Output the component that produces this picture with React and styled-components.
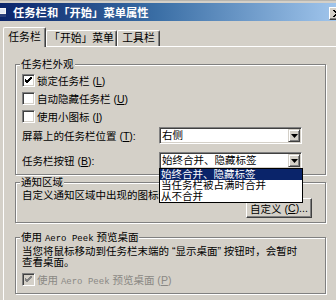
import React from 'react';
import styled, { createGlobalStyle } from 'styled-components';

const Global = createGlobalStyle`
  html, body { margin: 0; padding: 0; overflow: hidden; background: #d4d0c8; }
  body {
    width: 336px; height: 300px;
    font-family: "Liberation Sans", "Noto Sans CJK SC", sans-serif;
    font-size: 10.5px; color: #000;
  }
`;

const Window = styled.div`
  width: 347px;
  height: 300px;
  display: flex;
  flex-direction: column;
  background: #d4d0c8;
  border-top: 1px solid #b8b5ae;
  box-sizing: border-box;
`;

const TitleBar = styled.div`
  margin-top: 2px;
  height: 18px;
  display: flex;
  align-items: center;
  background: linear-gradient(to right, #0a246a 0%, #3a6ea5 45%, #a6caf0 100%);
  color: #fff;
  font-weight: bold;
  font-size: 11.3px;
  font-family: "Noto Sans CJK SC", sans-serif;
`;

const TitleIcon = styled.svg`
  margin-left: -4px;
  margin-right: 7px;
  flex: none;
`;

const CloseBtn = styled.div`
  margin-left: auto;
  margin-right: 2px;
  margin-top: 3px;
  width: 16px;
  height: 13px;
  box-sizing: border-box;
  background: #d4d0c8;
  border: 1px solid;
  border-color: #fff #404040 #404040 #fff;
  box-shadow: inset -1px -1px 0 #808080;
  display: flex;
  align-items: center;
  justify-content: center;
`;

const TabStrip = styled.div`
  display: flex;
  align-items: flex-end;
  margin-top: 6px;
  padding-left: 3px;
  height: 20px;
`;

const Tab = styled.div`
  position: relative;
  z-index: ${p => (p.$active ? 2 : 0)};
  box-sizing: border-box;
  width: ${p => p.$w}px;
  height: ${p => (p.$active ? 20 : 16)}px;
  margin-bottom: ${p => (p.$active ? 0 : 1)}px;
  background: #d4d0c8;
  border-top: 1px solid #fff;
  border-left: 1px solid #fff;
  border-right: 1px solid #404040;
  border-radius: 2px 2px 0 0;
  box-shadow: inset -1px 0 0 #808080;
  display: flex;
  align-items: ${p => (p.$active ? 'flex-start' : 'center')};
  padding-top: ${p => (p.$active ? 3 : 0)}px;
  justify-content: center;
  font-size: 10.8px;
  line-height: 13px;
  white-space: nowrap;
`;

const Panel = styled.div`
  flex: 1;
  margin-top: -1px;
  margin-left: 3px;
  border-top: 1px solid #fff;
  border-left: 1px solid #fff;
  padding-left: 11px;
  display: flex;
  flex-direction: column;
`;

const Group = styled.div`
  position: relative;
  width: 311px;
  box-sizing: border-box;
  margin-top: ${p => p.$mt}px;
  padding: 0 0 ${p => p.$pb}px 6px;
  border: 1px solid #808080;
  box-shadow: inset 1px 1px 0 #fff, 1px 1px 0 #fff;
  display: flex;
  flex-direction: column;
`;

const Legend = styled.div`
  align-self: flex-start;
  margin-top: -7px;
  margin-left: -2px;
  padding: 0 1px;
  line-height: 12px;
  background: #d4d0c8;
  white-space: nowrap;
`;

const Mono = styled.span`
  font-family: "Liberation Mono", monospace;
  font-size: 9px;
`;

const CheckRow = styled.div`
  display: flex;
  align-items: center;
  gap: 2px;
  height: ${p => p.$h || 18}px;
  margin-top: ${p => p.$mt || 0}px;
  color: ${p => (p.$disabled ? '#8a8884' : '#000')};
  white-space: nowrap;
`;

const Box = styled.div`
  width: 13px;
  height: 13px;
  box-sizing: border-box;
  background: ${p => (p.$disabled ? '#d4d0c8' : '#fff')};
  border: 1px solid;
  border-color: #808080 #fff #fff #808080;
  box-shadow: inset 1px 1px 0 #404040, inset -1px -1px 0 #d4d0c8;
  display: flex;
  align-items: center;
  justify-content: center;
  flex: none;
`;

const U = styled.span`
  text-decoration: underline;
`;

const ComboRow = styled.div`
  display: grid;
  grid-template-columns: 137px 143px;
  align-items: center;
  margin-top: ${p => p.$mt}px;
  white-space: nowrap;
`;

const Combo = styled.div`
  position: relative;
  height: 17px;
  box-sizing: border-box;
  padding: 1px;
  background: #fff;
  border: 1px solid;
  border-color: #808080 #fff #fff #808080;
  box-shadow: inset 1px 1px 0 #404040, inset -1px -1px 0 #d4d0c8;
  display: flex;
  align-items: center;
`;

const ComboText = styled.span`
  flex: 1;
  padding-left: 1px;
  line-height: 13px;
  overflow: hidden;
`;

const DropBtn = styled.div`
  width: 12px;
  height: 13px;
  box-sizing: border-box;
  background: #d4d0c8;
  border: 1px solid;
  border-color: #d4d0c8 #404040 #404040 #d4d0c8;
  box-shadow: inset 1px 1px 0 #fff, inset -1px -1px 0 #808080;
  display: flex;
  align-items: center;
  justify-content: center;
`;

const List = styled.div`
  position: absolute;
  z-index: 5;
  top: 15px;
  left: -1px;
  width: calc(100% + 3px);
  box-sizing: border-box;
  background: #fff;
  border: 1px solid #000;
  display: flex;
  flex-direction: column;
`;

const Item = styled.div`
  height: 11px;
  line-height: 11px;
  padding-left: 1px;
  background: ${p => (p.$sel ? '#0a246a' : '#fff')};
  color: ${p => (p.$sel ? '#fff' : '#000')};
  white-space: nowrap;
`;

const Text = styled.div`
  line-height: ${p => p.$lh}px;
  margin-top: ${p => p.$mt || 0}px;
  white-space: nowrap;
`;

const BtnRow = styled.div`
  display: flex;
  justify-content: flex-end;
  margin-top: -3px;
  padding-right: 13px;
`;

const Button = styled.div`
  width: 66px;
  height: 20px;
  box-sizing: border-box;
  background: #d4d0c8;
  border: 1px solid;
  border-color: #fff #404040 #404040 #fff;
  box-shadow: inset -1px -1px 0 #808080;
  display: flex;
  align-items: center;
  justify-content: center;
  white-space: nowrap;
`;

const Check = ({ color = '#000' }) => (
  <svg width="7" height="7" viewBox="0 0 7 7">
    <path d="M0 3 L2 5 L7 0 M0 4 L2 6 L7 1 M0 2 L2 4 L7 -1" stroke={color} strokeWidth="1" fill="none" />
  </svg>
);

const Arrow = () => (
  <svg width="7" height="4" viewBox="0 0 7 4">
    <path d="M0 0 H7 L3.5 4 Z" fill="#000" />
  </svg>
);

export default function App() {
  return (
    <>
      <Global />
      <Window>
        <TitleBar>
          <TitleIcon width="10" height="9" viewBox="0 0 10 9">
            <rect x="0" y="0" width="10" height="9" fill="#f4f4f4" />
            <rect x="0" y="6" width="10" height="3" fill="#2a3f7a" />
            <rect x="1" y="1" width="8" height="4" fill="#dfe6f2" />
          </TitleIcon>
          任务栏和「开始」菜单属性
          <CloseBtn>
            <svg width="8" height="7" viewBox="0 0 8 7">
              <path d="M0 0 L7 7 M1 0 L8 7 M7 0 L0 7 M8 0 L1 7" stroke="#000" strokeWidth="1" />
            </svg>
          </CloseBtn>
        </TitleBar>

        <TabStrip>
          <Tab $active $w={43}>任务栏</Tab>
          <Tab $w={71}>「开始」菜单</Tab>
          <Tab $w={43}>工具栏</Tab>
        </TabStrip>

        <Panel>
          <Group $mt={17} $pb={5}>
            <Legend>任务栏外观</Legend>
            <CheckRow $mt={1}>
              <Box><Check /></Box>
              <span>锁定任务栏 (<U>L</U>)</span>
            </CheckRow>
            <CheckRow>
              <Box />
              <span>自动隐藏任务栏 (<U>U</U>)</span>
            </CheckRow>
            <CheckRow>
              <Box />
              <span>使用小图标 (<U>I</U>)</span>
            </CheckRow>
            <ComboRow $mt={2}>
              <span>屏幕上的任务栏位置 (<U>T</U>):</span>
              <Combo>
                <ComboText>右侧</ComboText>
                <DropBtn><Arrow /></DropBtn>
              </Combo>
            </ComboRow>
            <ComboRow $mt={8}>
              <span>任务栏按钮 (<U>B</U>):</span>
              <Combo>
                <ComboText>始终合并、隐藏标签</ComboText>
                <DropBtn><Arrow /></DropBtn>
                <List>
                  <Item $sel>始终合并、隐藏标签</Item>
                  <Item>当任务栏被占满时合并</Item>
                  <Item>从不合并</Item>
                </List>
              </Combo>
            </ComboRow>
          </Group>

          <Group $mt={7} $pb={4}>
            <Legend>通知区域</Legend>
            <Text $lh={12} $mt={1}>自定义通知区域中出现的图标和通知。</Text>
            <BtnRow>
              <Button>自定义 (<U>C</U>)...</Button>
            </BtnRow>
          </Group>

          <Group $mt={14} $pb={7}>
            <Legend>使用 <Mono>Aero Peek</Mono> 预览桌面</Legend>
            <Text $lh={11} $mt={1}>当您将鼠标移动到任务栏末端的 “显示桌面” 按钮时，会暂时</Text>
            <Text $lh={11}>查看桌面。</Text>
            <CheckRow $disabled $h={14} $mt={4}>
              <Box $disabled><Check color="#808080" /></Box>
              <span>使用 <Mono>Aero Peek</Mono> 预览桌面 (<U>P</U>)</span>
            </CheckRow>
          </Group>
        </Panel>
      </Window>
    </>
  );
}
